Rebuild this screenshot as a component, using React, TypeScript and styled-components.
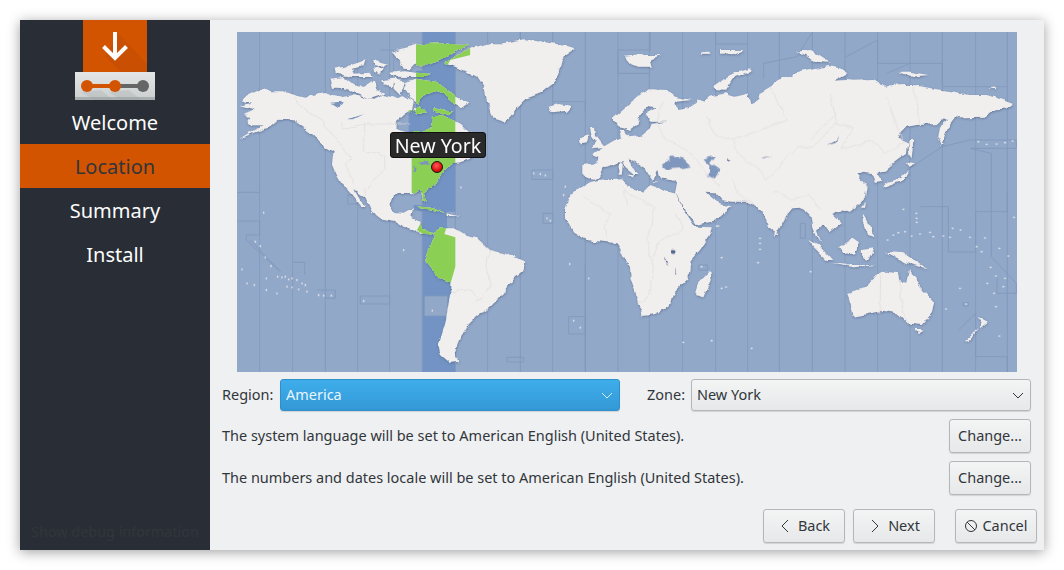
import React from 'react';
import styled, { createGlobalStyle } from 'styled-components';

const Global = createGlobalStyle`
  html, body { margin: 0; padding: 0; background: #fff; }
  body { font-family: "Noto Sans", sans-serif; width: 1064px; height: 570px; overflow: hidden; }
`;
const Page = styled.div`padding: 20px; width: 1064px; height: 570px; box-sizing: border-box;`;
const Win = styled.div`
  display: flex; width: 1024px; height: 530px; background: #eff0f1;
  box-shadow: 0 2px 12px rgba(0,0,0,.38);
`;
const Side = styled.aside`
  width: 190px; flex: none; background: #292e36; display: flex; flex-direction: column;
`;
const Logo = styled.svg`display: block; margin: 0 auto; flex: none;`;
const Step = styled.div<{ $on?: boolean }>`
  height: 44px; display: flex; align-items: center; justify-content: center; font-size: 20px;
  color: ${p => (p.$on ? '#31363b' : '#fcfcfc')}; background: ${p => (p.$on ? '#d35400' : 'transparent')};
`;
const Debug = styled.div`
  margin-top: auto; height: 36px; font-size: 14.4px; color: #31363b; text-align: center; line-height: 36px;
`;
const Main = styled.main`flex: 1; display: flex; flex-direction: column; padding: 12px 13px 7px 12px; min-width: 0;`;
const MapBox = styled.div`position: relative; width: 780px; height: 340px; margin: 0 0 0 15px; flex: none;`;
const MapSvg = styled.svg`display: block;`;
const Tip = styled.div`
  position: absolute; left: 153px; top: 100px; width: 96px; height: 26px; box-sizing: border-box;
  background: #2a2a2a; border: 1px solid #111; border-radius: 3px; color: #fcfcfc; font-size: 19.6px;
  display: flex; align-items: center; justify-content: center;
`;
const Pin = styled.div`
  position: absolute; left: 194px; top: 129px; width: 12px; height: 12px; box-sizing: border-box;
  border: 1.5px solid #111; border-radius: 50%;
  background: radial-gradient(circle at 45% 35%, #ff5a5a, #e01010 60%, #a80000);
`;
const Row = styled.div`display: flex; align-items: center; height: 34px; flex: none; font-size: 14.47px; color: #31363b;`;
const RegionRow = styled(Row)`height: 32px; margin-top: 7px;`;
const InfoRow = styled(Row)`justify-content: space-between; margin-top: 8px;`;
const Label = styled.label<{ $w: number }>`flex: none; white-space: nowrap; width: ${p => p.$w}px;`;
const ZoneLabel = styled(Label)`margin-left: 27px;`;
const Combo = styled.div<{ $on?: boolean }>`
  width: 340px; height: 32px; box-sizing: border-box; margin-left: 8px; padding: 0 5px;
  display: flex; align-items: center; justify-content: space-between; border-radius: 3px;
  color: ${p => (p.$on ? '#e8f5fd' : '#31363b')};
  border: 1px solid ${p => (p.$on ? '#2f8ecb' : '#b4b7b9')};
  background: ${p => (p.$on ? 'linear-gradient(#3eaeeb, #3498d6)' : 'linear-gradient(#f3f4f4, #e7e8e9)')};
  box-shadow: 0 1px 1px rgba(0,0,0,.12);
`;
const Btn = styled.button`
  height: 34px; width: 82px; box-sizing: border-box; padding: 0; font: inherit; font-size: 14.47px; color: #31363b;
  display: flex; align-items: center; justify-content: center; gap: 6px; border-radius: 3px;
  border: 1px solid #b4b7b9; background: linear-gradient(#f3f4f4, #e7e8e9);
  box-shadow: 0 1px 1px rgba(0,0,0,.12);
`;
const Nav = styled.div`display: flex; justify-content: flex-end; margin: 14px -6px 0 0;`;
const BackBtn = styled(Btn)`margin-right: 8px;`;
const CancelBtn = styled(Btn)`margin-left: 20px; gap: 4px;`;
const Tx = styled.span`position: relative; top: -1px;`;

const Chev = ({ d, c = '#31363b' }: { d: string; c?: string }) => (
  <svg width={14} height={14} viewBox="0 0 14 14"><path d={d} fill="none" stroke={c} strokeWidth="1" /></svg>
);

const left = [
  'M8,228 45,218 15,211 30,196 72,176 100,184 140,184 175,196 205,203 240,191 265,186 290,196 320,201 345,196 390,203 410,211 440,194 480,206 500,196 530,214 525,241 500,256 480,276 478,296 500,306 550,306 582,291 585,258 610,258 650,268 675,284 693,304 720,316 725,330 690,345 680,365 704,385 669,397 644,400 619,425 599,460 574,480 561,490 569,515 561,512 549,480 535,490 490,488 466,500 458,525 470,546 500,548 515,540 527,540 523,565 550,575 555,600 578,604 590,606 580,612 556,613 530,598 500,590 470,572 430,565 405,545 385,505 352,480 375,520 384,528 372,528 345,495 330,478 318,468 300,436 285,401 290,366 255,346 230,316 205,296 170,271 125,269 100,291 55,306 5,328 40,306 80,286 50,286 30,276 40,261 18,254 50,241Z',
  'M278,146 320,141 340,156 380,171 410,151 420,181 445,191 400,206 360,191 320,176 285,176Z',
  'M295,116 340,106 385,91 380,108 345,116 350,131 400,128 410,141 345,141 300,131Z',
  'M405,88 450,101 440,111 410,101Z','M412,108 440,116 432,134 415,125Z','M430,151 470,146 465,171 435,166Z',
  'M475,61 537,46 537,100 520,118 500,116 490,96 465,66Z',
  'M537,44 600,40 697,42 650,66 620,86 580,106 537,106Z',
  'M460,128 500,124 537,128 578,131 565,141 537,141 470,140Z',
  'M507,156 537,146 600,156 640,186 655,200 695,218 672,235 650,216 620,190 590,181 565,191 545,221 520,205 500,175Z',
  'M470,146 505,151 490,196 470,176Z',
  'M527,241 550,228 570,251 540,251Z','M590,234 620,241 650,246 620,256 585,241Z',
  'M622,98 660,75 700,55 760,40 800,40 860,28 945,40 1015,55 985,75 975,90 970,110 950,160 910,190 870,205 840,235 810,278 770,265 750,220 745,180 720,140 680,120Z',
  'M935,230 965,222 1005,228 990,245 945,250Z',
  'M590,606 610,595 650,595 690,618 720,625 760,660 800,670 865,695 860,720 830,745 800,790 760,830 720,855 695,880 670,920 650,970 665,995 640,998 612,975 605,945 625,880 640,790 640,760 605,745 570,700 565,670 585,640 590,620Z',
  'M544,528 589,535 624,550 589,540 554,535Z','M629,550 664,558 629,558Z',
  'M1059,292 1074,290 1077,315 1104,350 1064,355 1079,335 1064,315Z','M1029,325 1057,315 1049,340 1031,343Z',
  'M1164,80 1200,84 1200,100 1180,98Z',
];
const right = [
  'M-165,540 -150,500 -120,475 -90,457 -65,450 10,445 20,470 70,485 90,465 160,490 170,500 195,545 225,590 275,592 270,615 240,660 212,690 205,745 165,785 148,830 105,852 68,858 58,820 32,745 30,710 10,680 0,655 -10,640 -50,635 -100,630 -140,605 -165,565Z',
  'M-113,405 -68,400 -65,380 -85,372 -50,350 -15,330 5,322 0,300 15,300 25,322 60,318 90,295 95,282 140,275 92,275 82,265 78,250 110,232 85,228 58,255 52,285 30,300 15,292 -5,288 -22,267 15,235 50,200 90,178 140,180 165,200 215,210 165,215 172,240 205,235 230,218 232,205 250,215 265,200 320,190 340,200 372,195 385,190 380,200 395,220 415,210 418,190 460,165 470,150 510,140 540,125 600,115 625,108 660,115 682,130 640,152 680,150 700,152 760,150 795,170 850,165 880,165 950,178 1000,185 1045,195 1100,195 1150,210 1182,222 1160,238 1115,242 1095,260 1020,262 1010,258 985,290 965,345 955,320 960,290 985,270 965,268 950,282 890,285 860,290 830,322 865,338 860,370 820,400 790,425 770,432 785,455 765,458 752,428 730,425 712,432 740,465 735,505 720,520 690,545 665,538 640,555 665,580 630,607 610,580 590,600 605,640 590,615 580,590 575,560 560,545 540,530 520,532 500,555 470,610 445,590 425,545 415,530 385,515 335,515 305,510 285,490 258,488 290,515 335,530 290,570 230,585 200,545 165,490 172,455 165,452 120,445 112,420 108,425 100,450 85,432 75,415 45,395 25,385 55,435 45,435 10,405 10,400 -15,400 -50,415 -60,440 -80,450 -105,440 -113,435Z',
  'M225,795 235,760 268,725 272,750 250,802Z',
  'M280,170 330,135 392,115 390,122 340,145 315,182 290,180Z','M15,80 70,75 120,75 90,90 95,110 55,110 30,100Z',
  'M240,70 270,68 275,74 245,74Z','M300,60 370,60 340,72 300,74Z',
  'M530,65 570,60 630,98 590,95Z','M835,125 870,125 925,135 870,140Z','M1105,175 1130,172 1125,178Z',
  'M865,330 880,330 875,385 868,375Z','M858,395 885,400 865,410Z','M865,420 850,450 790,472 795,460 840,445Z',
  'M737,515 735,530 726,530Z','M730,555 750,590 767,622 745,615 725,570Z','M655,650 700,625 720,640 705,670 670,675Z',
  'M565,630 600,650 637,690 620,690 580,650Z','M635,695 700,705 768,705 700,712Z','M725,660 760,655 745,690 728,685Z',
  'M795,665 850,670 920,715 860,700 830,685Z',
  'M682,790 700,780 740,770 770,735 800,725 830,730 835,750 862,755 870,720 900,770 942,815 935,850 905,885 860,880 830,850 790,842 700,860 695,830Z',
  'M885,900 908,900 895,915Z','M1070,860 1105,880 1080,900 1085,880Z','M1030,935 1075,895 1050,930Z','M465,605 475,620 463,622Z',
  'M0,400 8,405 5,432 -2,430Z','M25,438 45,435 42,445Z','M95,453 115,455 100,458Z',
];
const lakes = [
  'M125,405 155,380 190,385 215,410 180,415 140,418Z','M250,385 285,378 270,400 298,420 285,445 265,440 268,405Z',
  'M620,345 650,330 660,315 650,335Z','M425,385 458,378 430,382Z','M325,385 335,390 325,395Z','M150,660 165,660 160,672 150,670Z',
  'M132,680 145,705 135,695Z','M166,712 172,735 167,730Z',
];
const seaLakes = ['M280,221 325,216 300,234Z','M332,268 380,253 350,268Z','M549,395 574,390 574,405 544,400Z','M529,410 544,418 530,425Z'];
const tz = [68,167,265,362,458,556,655,752,850,947,1045,1143,1237,1337,1436,1532,1627,1726,1824,1922,2019,2116,2216,2311];
const tzSteps = [
  'M430,60 470,60 470,150','M0,487 68,487','M0,573 68,573 68,615 28,615 28,630 130,725 40,630','M332,495 362,495 362,522 332,522Z','M168,697 203,697 203,735','M240,780 295,780 295,805 265,805',
  'M370,798 458,798 458,822 370,822Z','M562,798 632,798 632,858 562,858Z','M885,420 947,420 947,448 885,448Z','M918,550 947,550 947,580 918,580Z','M995,860 1045,860 1045,912 995,912Z','M810,982 860,982 860,996 810,996Z',
  'M850,140 850,6','M1045,250 1045,215 947,215 947,6','M1045,700 1045,1026','M1240,6 1240,60 1143,60 1143,130 1237,130','M1436,6 1436,42 1532,42','M1580,145 1580,100 1680,80 1726,6','M1827,80 1922,30 1922,100 2019,100 2116,100 2116,170 2311,170','M1950,130 2019,100','M2050,530 2134,530 2134,666 2216,666 2216,545 2311,545 2311,488','M2010,420 2116,350 2200,330 2338,330 2338,355 2200,355 2263,370 2263,680 2338,760 2338,790 2280,790 2280,740','M2165,900 2216,850 2216,980 2265,980 2311,980 2311,1026','M1412,705 1412,720 1385,720 1385,705Z','M1690,580 1705,580 1705,625 1690,625 1690,600Z','M2178,818 2194,818 2194,828 2178,828Z',
];
const dotsL = [[15,718],[30,760],[52,765],[88,745],[122,740],[135,742],[145,740],[155,748],[165,745],[180,750],[195,760],[205,765],[210,785],[150,770],[165,772],[185,778],[88,780],[120,790],[245,795],[260,797],[283,797],[380,813],[55,635],[70,648],[85,682],[102,708],[500,660],[672,472],[910,432],[925,436],[890,430],[1010,872],[1030,893],[998,702],[1055,745],[628,604],[586,842],[80,548],[985,470],[1002,495],[980,495],[930,565],[940,572]];
const dotsR = [[305,683],[414,698],[572,725],[305,775],[318,771],[190,937],[275,932],[395,955],[850,538],[889,550],[890,565],[890,577],[420,625],[420,640],[420,658],[803,630],[820,615],[855,605],[835,608],[875,618],[900,612],[930,607],[940,620],[970,618],[990,622],[998,595],[1022,600],[1050,622],[1095,624],[1070,650],[1085,665],[1112,712],[1138,655],[1165,678],[1128,738],[1102,760],[1155,745],[1150,770],[1122,790],[978,837],[1038,822],[1138,918],[1020,775],[1128,830],[1075,335],[1100,343],[1130,342],[1155,338],[1178,333],[1182,562],[295,588],[245,710],[290,588]];
const bordersL = ['M175,196 180,220 205,240 250,270 300,330 345,385 325,400 350,460','M380,282 380,360 440,375 440,420 385,480 385,505','M315,275 315,300 380,282 520,282','M720,625 760,665 745,700 760,770 720,815','M640,785 700,780 730,810','M1035,495 1120,555 1100,590 1110,625','M1155,470 1175,530'];
const bordersR = ['M10,480 100,530 90,610 80,630 100,715 85,800 55,820','M165,550 190,600 120,630 100,680','M130,210 110,280 130,320 200,360 250,420 300,470','M260,260 290,320 340,330 420,300 500,270 470,210 450,170','M340,330 350,370 420,420 440,450 530,350 580,350 650,280 630,190','M640,280 700,290 660,360 760,330 790,370 850,340 800,200','M780,850 782,730','M860,880 840,800 840,750','M340,450 350,490 400,520','M460,480 520,510 570,495 600,540','M570,330 610,290 650,250','M900,290 880,170'];

const Land = () => (
  <>
    {left.map((d, i) => <path key={i} d={d} />)}
    <g transform="translate(1149 0)">{right.map((d, i) => <path key={i} d={d} />)}</g>
  </>
);

export default function App() {
  return (
    <Page>
      <Global />
      <Win>
        <Side>
          <Logo width="80" height="80" viewBox="0 0 80 80">
            <defs>
              <linearGradient id="strip" x1="0" y1="0" x2="0" y2="1">
                <stop offset="0" stopColor="#e4e6e6" /><stop offset=".9" stopColor="#cdd1d1" /><stop offset=".9" stopColor="#a9afb0" />
              </linearGradient>
            </defs>
            <rect x="8" y="0" width="64" height="52" fill="#d35400" />
            <path d="M44 14 L72 44 72 52 46 52 30 36Z" fill="#c94f02" />
            <rect x="0" y="52" width="80" height="28" fill="url(#strip)" />
            <path d="M6 72 L20 80 H38 L26 70 Z M34 72 L46 80 H66 L54 70 Z" fill="#9aa0a0" opacity=".25" />
            <path d="M40 12 V38 M28.5 26.5 L40 38 51.5 26.5" fill="none" stroke="#fcfcfc" strokeWidth="4" />
            <path d="M12 66 H40" stroke="#d35400" strokeWidth="4" />
            <path d="M40 66 H68" stroke="#666" strokeWidth="4" />
            <circle cx="12" cy="66" r="6" fill="#d35400" /><circle cx="40" cy="66" r="6" fill="#d35400" /><circle cx="68" cy="66" r="6" fill="#666" />
          </Logo>
          <Step>Welcome</Step>
          <Step $on>Location</Step>
          <Step>Summary</Step>
          <Step>Install</Step>
          <Debug>Show debug information</Debug>
        </Side>
        <Main>
          <MapBox>
            <MapSvg width="780" height="340" viewBox="0 6 2340 1020">
              <defs>
                <g id="land"><Land /></g>
                <clipPath id="greenclip">
                  <path d="M537,30 700,30 700,75 640,90 620,125 655,140 655,545 630,545 630,590 622,612 655,622 655,710 640,762 556,762 556,612 540,600 556,570 556,550 530,545 530,520 556,516 556,490 524,490 524,310 515,300 515,240 537,240Z" />
                </clipPath>
                <filter id="rough" filterUnits="userSpaceOnUse" x="-20" y="-20" width="2380" height="1080">
                  <feTurbulence type="fractalNoise" baseFrequency="0.035" numOctaves="3" seed="4" result="n" />
                  <feDisplacementMap in="SourceGraphic" in2="n" scale="16" xChannelSelector="R" yChannelSelector="G" />
                </filter>
                <filter id="sh" filterUnits="userSpaceOnUse" x="-20" y="-20" width="2380" height="1080">
                  <feDropShadow dx="1" dy="3" stdDeviation="2.5" floodColor="#3c4f70" floodOpacity=".5" />
                </filter>
              </defs>
              <rect x="0" y="6" width="2340" height="1020" fill="#92a8c9" />
              <path d="M556,6 655,6 655,545 630,545 630,590 655,620 655,1026 556,1026 556,545 530,540 530,525 556,525 556,490 515,490 515,240 537,240 537,122 556,122Z" fill="#7293c3" />
              <rect x="562" y="798" width="70" height="60" fill="#92a8c9" />
              {tz.map(x => <line key={x} x1={x} y1="6" x2={x} y2="1026" stroke="#8197ba" strokeWidth="2.5" />)}
              {tzSteps.map((d, i) => <path key={i} d={d} fill="none" stroke="#8197ba" strokeWidth="2.5" />)}
              <g filter="url(#sh)"><use href="#land" fill="#f1eeee" filter="url(#rough)" /></g>
              <g clipPath="url(#greenclip)"><use href="#land" fill="#8bcf55" filter="url(#rough)" /></g>
              <g filter="url(#rough)">
                <g fill="#7b93bb">
                  {seaLakes.map((d, i) => <path key={i} d={d} />)}
                  <g transform="translate(1149 0)">{lakes.map((d, i) => <path key={i} d={d} fill={i < 2 ? '#7f97bd' : '#52688e'} />)}</g>
                </g>
                <g fill="none" stroke="#dfdbd9" strokeWidth="2">
                  {bordersL.map((d, i) => <path key={i} d={d} />)}
                  <g transform="translate(1149 0)">{bordersR.map((d, i) => <path key={i} d={d} />)}</g>
                </g>
              </g>
              <g fill="#f1eeee">
                {dotsL.map(([x, y], i) => <circle key={i} cx={x} cy={y} r="2.6" />)}
                <g transform="translate(1149 0)">{dotsR.map(([x, y], i) => <circle key={i} cx={x} cy={y} r="2.6" />)}</g>
              </g>
            </MapSvg>
            <Tip>New York</Tip>
            <Pin />
          </MapBox>
          <RegionRow>
            <Label $w={50}><Tx>Region:</Tx></Label>
            <Combo $on><Tx>America</Tx><Chev d="M2 5 L7 10 12 5" c="#d8effb" /></Combo>
            <ZoneLabel $w={36}><Tx>Zone:</Tx></ZoneLabel>
            <Combo><Tx>New York</Tx><Chev d="M2 5 L7 10 12 5" /></Combo>
          </RegionRow>
          <InfoRow>
            <Tx>The system language will be set to American English (United States).</Tx>
            <Btn><Tx>Change...</Tx></Btn>
          </InfoRow>
          <InfoRow>
            <Tx>The numbers and dates locale will be set to American English (United States).</Tx>
            <Btn><Tx>Change...</Tx></Btn>
          </InfoRow>
          <Nav>
            <BackBtn><Chev d="M10 1 L4 7 10 13" /><Tx>Back</Tx></BackBtn>
            <Btn><Chev d="M4 1 L10 7 4 13" /><Tx>Next</Tx></Btn>
            <CancelBtn>
              <svg width="14" height="14" viewBox="0 0 14 14"><circle cx="7" cy="7" r="5.5" fill="none" stroke="#31363b" /><path d="M3 3 L11 11" stroke="#31363b" /></svg>
              <Tx>Cancel</Tx>
            </CancelBtn>
          </Nav>
        </Main>
      </Win>
    </Page>
  );
}
